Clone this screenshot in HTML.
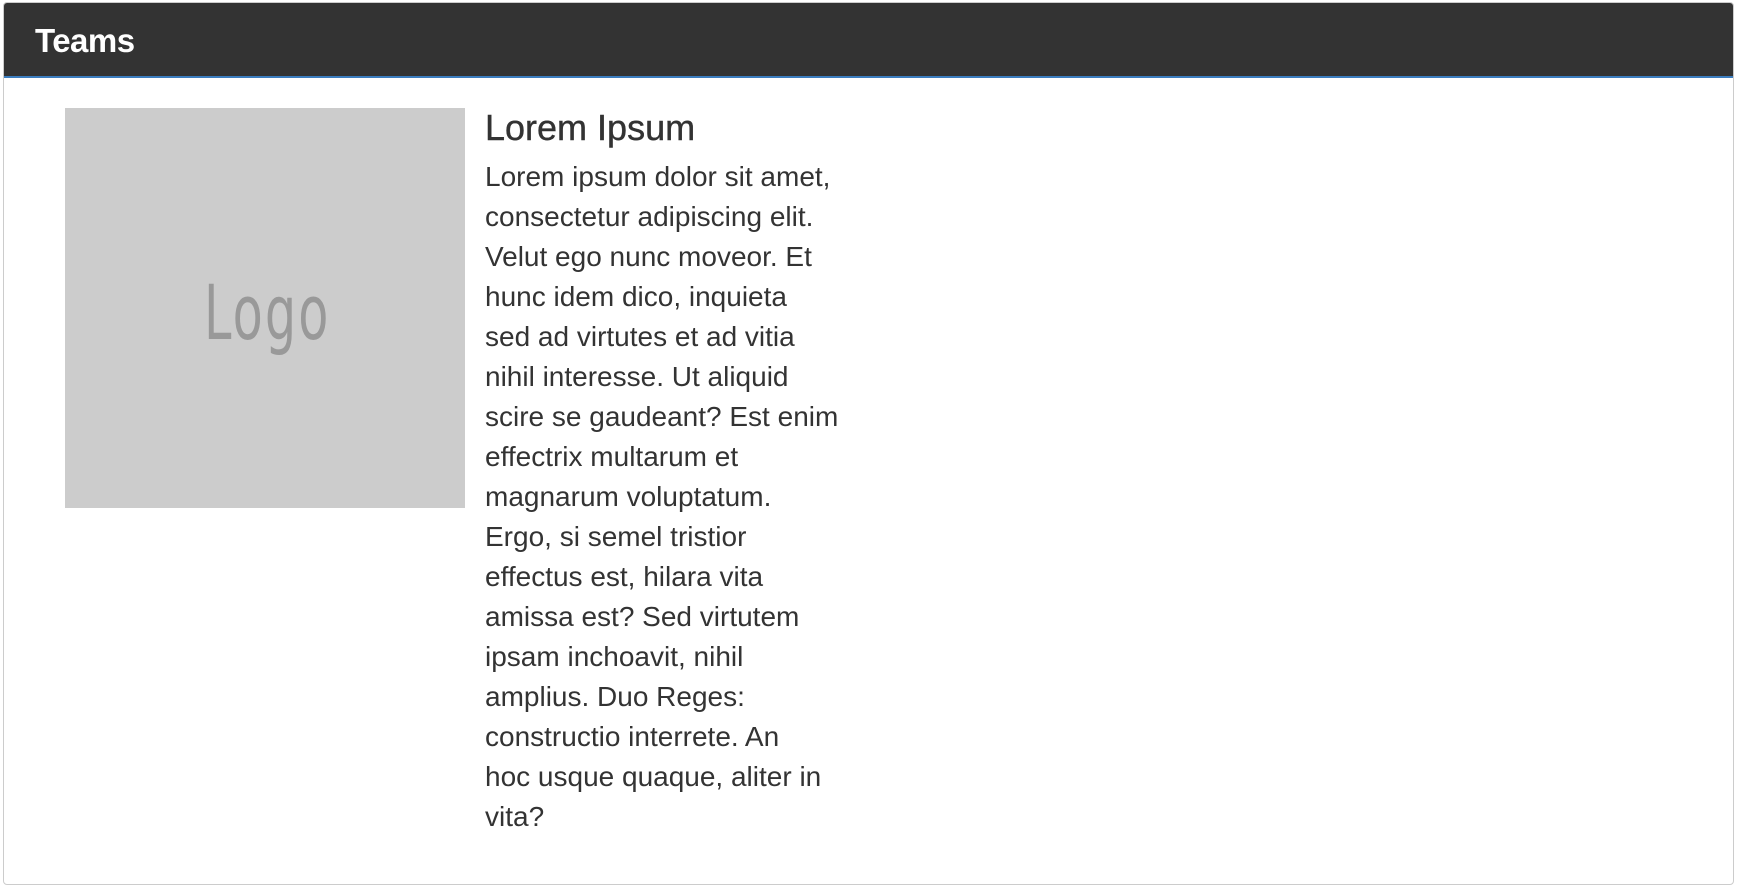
<!DOCTYPE html>
<html><head><style>
html,body{margin:0;padding:0;background:#fff;width:1738px;height:890px;overflow:hidden;font-family:"Liberation Sans",Arial,sans-serif;}
.panel{position:absolute;left:3px;top:2px;width:1731px;height:883px;border:1px solid #ccc;border-radius:4px;box-sizing:border-box;overflow:hidden;}
.hd{position:absolute;left:0;top:0;right:0;height:73px;background:#333;border-bottom:2px solid #3b7dbf;}
.hd span{position:absolute;left:31px;top:20px;color:#fff;font-weight:bold;font-size:33px;line-height:36px;letter-spacing:-0.5px;}
.logo{position:absolute;left:61px;top:105px;width:400px;height:400px;background:#ccc;}
.logo span{position:absolute;left:139px;top:165px;font-family:"Liberation Sans Narrow","DejaVu Sans Condensed",sans-serif;font-size:76px;color:#999;line-height:80px;letter-spacing:3px;transform:scaleX(0.72);transform-origin:0 0;}
.h{position:absolute;left:481px;top:103px;font-size:36px;color:#333;line-height:44px;white-space:nowrap;-webkit-text-stroke:0.4px #333;}
.t{position:absolute;left:481px;top:154px;font-size:28px;color:#333;line-height:40px;white-space:nowrap;}
</style></head><body>
<div class="panel">
<div class="hd"><span>Teams</span></div>
<div class="logo"><span>Logo</span></div>
<div class="h">Lorem Ipsum</div>
<div class="t">Lorem ipsum dolor sit amet,<br>consectetur adipiscing elit.<br>Velut ego nunc moveor. Et<br>hunc idem dico, inquieta<br>sed ad virtutes et ad vitia<br>nihil interesse. Ut aliquid<br>scire se gaudeant? Est enim<br>effectrix multarum et<br>magnarum voluptatum.<br>Ergo, si semel tristior<br>effectus est, hilara vita<br>amissa est? Sed virtutem<br>ipsam inchoavit, nihil<br>amplius. Duo Reges:<br>constructio interrete. An<br>hoc usque quaque, aliter in<br>vita?</div>
</div>
</body></html>
